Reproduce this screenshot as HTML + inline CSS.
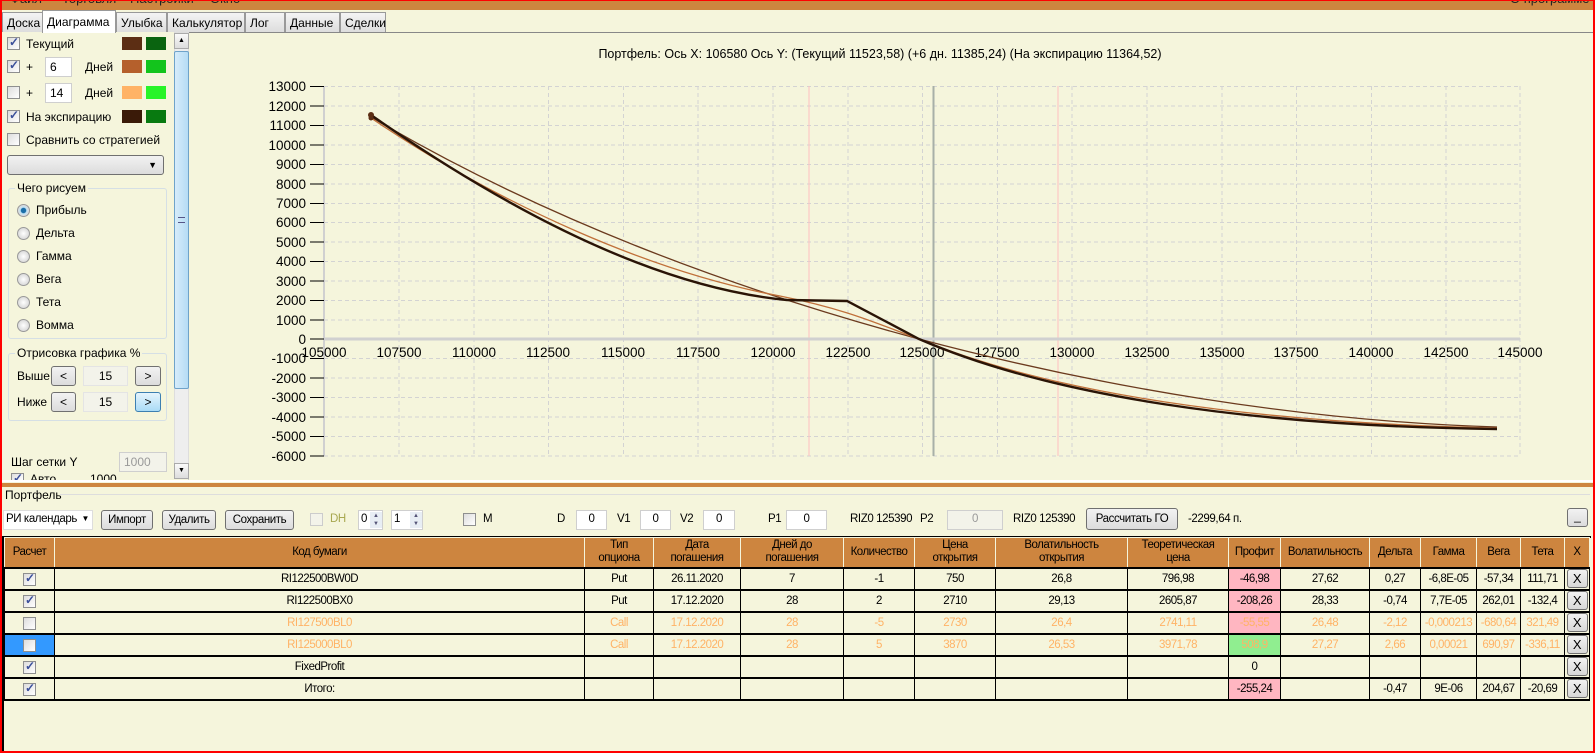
<!DOCTYPE html>
<html><head><meta charset="utf-8"><style>
*{box-sizing:border-box;margin:0;padding:0}
body{width:1595px;height:753px;overflow:hidden;background:#f5f5dc;font-family:"Liberation Sans",sans-serif;font-size:12px;color:#000;position:relative}
.a{position:absolute}
.menu{left:0;top:0;width:1595px;height:10px;background:#cd853f;overflow:hidden}
.menu span{position:absolute;top:-9px;font-size:13px;color:#222}
.tab{position:absolute;top:12px;height:20px;border:1px solid #999;border-bottom:none;background:linear-gradient(#f4f4f4,#ddd);font-size:12px;padding:3px 4px 0;white-space:nowrap}
.tab.sel{top:10px;height:23px;background:#fff;padding-top:4px}
.cb{position:absolute;width:13px;height:13px;border:1px solid #8e8f8f;background:linear-gradient(135deg,#ddd,#fff)}
.cb.on::after{content:"✓";position:absolute;left:1px;top:-3px;font-size:12px;color:#3a4f9a;font-weight:bold}
.sw{position:absolute;width:20px;height:13px}
.inp{position:absolute;background:#fff;border:1px solid #cfcfcf;padding:2px 4px;font-size:12px}
.rad{position:absolute;width:13px;height:13px;border-radius:50%;border:1px solid #999;background:radial-gradient(#fff,#ccc)}
.rad.on{background:radial-gradient(#1b6fa8 30%,#bfe2f5 40%,#ddd 70%)}
.grp{position:absolute;border:1px solid #d5dfe5;border-radius:3px}
.grp span{position:absolute;top:-8px;left:6px;background:#f5f5dc;padding:0 2px}
.btn{position:absolute;border:1px solid #707070;border-radius:3px;background:linear-gradient(#f2f2f2,#dcdcdc);text-align:center;font-size:12px}
.t{position:absolute;white-space:nowrap}
.n{font-size:11.5px;letter-spacing:-0.4px}
table{position:absolute;left:4px;top:537px;border-collapse:collapse;table-layout:fixed;width:1585px}
td{border:2px solid #000;border-width:0 1px 2px 1px;height:22px;text-align:center;font-size:11.5px;letter-spacing:-0.5px;white-space:nowrap;overflow:hidden;padding:0}
th{background:#cd853f;font-weight:normal;border:1px solid #f5f5dc;border-bottom:2px solid #000;height:30px;font-size:11.5px;letter-spacing:-0.5px;line-height:13px;padding:0}
td.c{position:relative}
td .cb{left:18px;top:4px}
.f{color:#ffb366}
.pk{background:#ffb6c1}.gr{background:#90ee90}
.x{display:inline-block;width:21px;height:19px;border:1px solid #707070;border-radius:3px;background:linear-gradient(#f2f2f2,#d8d8d8);font-size:13px;line-height:18px}
</style></head><body>
<div class="a menu"><span style="left:10px">Файл</span><span style="left:62px">Торговля</span><span style="left:130px">Настройки</span><span style="left:210px">Окно</span><span style="left:1510px">О программе</span></div>
<div class="a" style="left:0;top:0;width:1595px;height:753px;border:2px solid #f00;border-top:1px solid #f00;pointer-events:none;z-index:5"></div>
<div class="tab" style="left:2px;width:41px">Доска</div>
<div class="tab sel" style="left:42px;width:74px">Диаграмма</div>
<div class="tab" style="left:116px;width:51px">Улыбка</div>
<div class="tab" style="left:167px;width:78px">Калькулятор</div>
<div class="tab" style="left:245px;width:40px">Лог</div>
<div class="tab" style="left:285px;width:55px">Данные</div>
<div class="tab" style="left:340px;width:46px">Сделки</div>
<div class="a" style="left:188px;top:32px;width:1406px;height:450px;border-top:1px solid #888;border-left:1px solid #ccc;border-bottom:2px solid #888"></div>

<div class="cb on" style="left:7px;top:37px"></div><div class="t" style="left:26px;top:37px">Текущий</div>
<div class="sw" style="left:122px;top:37px;background:#5c2e14"></div><div class="sw" style="left:146px;top:37px;background:#0a6410"></div>
<div class="cb on" style="left:7px;top:60px"></div><div class="t" style="left:26px;top:60px">+</div>
<div class="inp" style="left:45px;top:57px;width:27px;height:20px">6</div><div class="t" style="left:85px;top:60px">Дней</div>
<div class="sw" style="left:122px;top:60px;background:#b5602c"></div><div class="sw" style="left:146px;top:60px;background:#13c41c"></div>
<div class="cb" style="left:7px;top:86px"></div><div class="t" style="left:26px;top:86px">+</div>
<div class="inp" style="left:45px;top:83px;width:27px;height:20px">14</div><div class="t" style="left:85px;top:86px">Дней</div>
<div class="sw" style="left:122px;top:86px;background:#ffb366"></div><div class="sw" style="left:146px;top:86px;background:#28f428"></div>
<div class="cb on" style="left:7px;top:110px"></div><div class="t" style="left:26px;top:110px">На экспирацию</div>
<div class="sw" style="left:122px;top:110px;background:#3a1a08"></div><div class="sw" style="left:146px;top:110px;background:#087a10"></div>
<div class="cb" style="left:7px;top:133px"></div><div class="t" style="left:26px;top:133px">Сравнить со стратегией</div>
<div class="btn" style="left:7px;top:155px;width:157px;height:20px;text-align:right;padding-right:6px;font-size:9px;line-height:18px">▼</div>
<div class="grp" style="left:8px;top:188px;width:159px;height:151px"><span>Чего рисуем</span></div>
<div class="rad on" style="left:17px;top:204px"></div><div class="t" style="left:36px;top:203px">Прибыль</div>
<div class="rad" style="left:17px;top:227px"></div><div class="t" style="left:36px;top:226px">Дельта</div>
<div class="rad" style="left:17px;top:250px"></div><div class="t" style="left:36px;top:249px">Гамма</div>
<div class="rad" style="left:17px;top:273px"></div><div class="t" style="left:36px;top:272px">Вега</div>
<div class="rad" style="left:17px;top:296px"></div><div class="t" style="left:36px;top:295px">Тета</div>
<div class="rad" style="left:17px;top:319px"></div><div class="t" style="left:36px;top:318px">Вомма</div>
<div class="grp" style="left:8px;top:353px;width:159px;height:68px"><span>Отрисовка графика %</span></div>
<div class="t" style="left:17px;top:369px">Выше</div>
<div class="btn" style="left:51px;top:366px;width:25px;height:20px;line-height:18px">&lt;</div>
<div class="inp" style="left:83px;top:366px;width:45px;height:20px;text-align:center;background:#f3f3ea;border-color:#e4e4e4">15</div>
<div class="btn" style="left:135px;top:366px;width:26px;height:20px;line-height:18px">&gt;</div>
<div class="t" style="left:17px;top:395px">Ниже</div>
<div class="btn" style="left:51px;top:392px;width:25px;height:20px;line-height:18px">&lt;</div>
<div class="inp" style="left:83px;top:392px;width:45px;height:20px;text-align:center;background:#f3f3ea;border-color:#e4e4e4">15</div>
<div class="btn" style="left:135px;top:392px;width:26px;height:20px;line-height:18px;border-color:#3c7fb1;background:linear-gradient(#e5f4fc,#a9dbf6)">&gt;</div>
<div class="t" style="left:11px;top:455px">Шаг сетки Y</div>
<div class="inp" style="left:119px;top:452px;width:48px;height:20px;color:#999;background:#f3f3ea">1000</div>
<div class="cb on" style="left:11px;top:473px;height:8px;overflow:hidden"></div><div class="t" style="left:30px;top:472px;height:9px;overflow:hidden">Авто</div><div class="t" style="left:90px;top:472px;height:9px;overflow:hidden">1000</div>
<div class="a" style="left:174px;top:32px;width:15px;height:447px;background:#eee;border:1px solid #ddd"></div>
<div class="a" style="left:174px;top:33px;width:15px;height:16px;border:1px solid #aaa;background:linear-gradient(#fafafa,#ddd);font-size:7px;text-align:center;line-height:14px">▲</div>
<div class="a" style="left:174px;top:51px;width:15px;height:338px;border:1px solid #6fa3c9;border-radius:2px;background:linear-gradient(90deg,#d7ecfa,#b5dcf5)"></div>
<div class="a" style="left:178px;top:217px;width:7px;height:6px;border-top:1px solid #558;border-bottom:1px solid #558"></div>
<div class="a" style="left:174px;top:463px;width:15px;height:16px;border:1px solid #aaa;background:linear-gradient(#fafafa,#ddd);font-size:7px;text-align:center;line-height:14px">▼</div>

<svg class="a" style="left:0;top:0" width="1595" height="753" font-family="Liberation Sans,sans-serif">
<text x="880" y="58" font-size="12.5" text-anchor="middle">Портфель: Ось X: 106580 Ось Y:  (Текущий 11523,58)  (+6 дн. 11385,24)  (На экспирацию 11364,52)</text>
<g stroke="#d3d3d3" stroke-dasharray="4,3" stroke-width="1">
<line x1="324" y1="86.5" x2="1520" y2="86.5"/><line x1="324" y1="106" x2="1520" y2="106"/><line x1="324" y1="125.5" x2="1520" y2="125.5"/><line x1="324" y1="145" x2="1520" y2="145"/><line x1="324" y1="164.5" x2="1520" y2="164.5"/><line x1="324" y1="184" x2="1520" y2="184"/><line x1="324" y1="203.5" x2="1520" y2="203.5"/><line x1="324" y1="222.5" x2="1520" y2="222.5"/><line x1="324" y1="242" x2="1520" y2="242"/><line x1="324" y1="261.5" x2="1520" y2="261.5"/><line x1="324" y1="281" x2="1520" y2="281"/><line x1="324" y1="300.5" x2="1520" y2="300.5"/><line x1="324" y1="320" x2="1520" y2="320"/><line x1="324" y1="358.5" x2="1520" y2="358.5"/><line x1="324" y1="378" x2="1520" y2="378"/><line x1="324" y1="397.5" x2="1520" y2="397.5"/><line x1="324" y1="417" x2="1520" y2="417"/><line x1="324" y1="436.5" x2="1520" y2="436.5"/><line x1="324" y1="456" x2="1520" y2="456"/>
<line x1="399" y1="86" x2="399" y2="456"/><line x1="474" y1="86" x2="474" y2="456"/><line x1="548.5" y1="86" x2="548.5" y2="456"/><line x1="623.5" y1="86" x2="623.5" y2="456"/><line x1="698" y1="86" x2="698" y2="456"/><line x1="773" y1="86" x2="773" y2="456"/><line x1="848" y1="86" x2="848" y2="456"/><line x1="922.5" y1="86" x2="922.5" y2="456"/><line x1="997.5" y1="86" x2="997.5" y2="456"/><line x1="1072" y1="86" x2="1072" y2="456"/><line x1="1147" y1="86" x2="1147" y2="456"/><line x1="1222" y1="86" x2="1222" y2="456"/><line x1="1296.5" y1="86" x2="1296.5" y2="456"/><line x1="1371.5" y1="86" x2="1371.5" y2="456"/><line x1="1446" y1="86" x2="1446" y2="456"/><line x1="1520" y1="86" x2="1520" y2="456"/>
</g>
<line x1="809" y1="86" x2="809" y2="456" stroke="#ffc0c0"/><line x1="1058" y1="86" x2="1058" y2="456" stroke="#ffc0c0"/>
<line x1="933.5" y1="86" x2="933.5" y2="456" stroke="#a8b0a8" stroke-width="2"/>
<line x1="324" y1="86" x2="324" y2="456" stroke="#d0d0d0" stroke-width="2"/>
<line x1="324" y1="339" x2="1520" y2="339" stroke="#d0d0d0" stroke-width="3"/>
<g stroke="#000"><line x1="310" y1="86.5" x2="324" y2="86.5"/><line x1="310" y1="106" x2="324" y2="106"/><line x1="310" y1="125.5" x2="324" y2="125.5"/><line x1="310" y1="145" x2="324" y2="145"/><line x1="310" y1="164.5" x2="324" y2="164.5"/><line x1="310" y1="184" x2="324" y2="184"/><line x1="310" y1="203.5" x2="324" y2="203.5"/><line x1="310" y1="222.5" x2="324" y2="222.5"/><line x1="310" y1="242" x2="324" y2="242"/><line x1="310" y1="261.5" x2="324" y2="261.5"/><line x1="310" y1="281" x2="324" y2="281"/><line x1="310" y1="300.5" x2="324" y2="300.5"/><line x1="310" y1="320" x2="324" y2="320"/><line x1="310" y1="339" x2="324" y2="339"/><line x1="310" y1="358.5" x2="324" y2="358.5"/><line x1="310" y1="378" x2="324" y2="378"/><line x1="310" y1="397.5" x2="324" y2="397.5"/><line x1="310" y1="417" x2="324" y2="417"/><line x1="310" y1="436.5" x2="324" y2="436.5"/><line x1="310" y1="456" x2="324" y2="456"/></g>
<g font-size="13.5" text-anchor="end">
<text x="306" y="91">13000</text><text x="306" y="111">12000</text><text x="306" y="130">11000</text><text x="306" y="150">10000</text><text x="306" y="169">9000</text><text x="306" y="189">8000</text><text x="306" y="208">7000</text><text x="306" y="227">6000</text><text x="306" y="247">5000</text><text x="306" y="266">4000</text><text x="306" y="286">3000</text><text x="306" y="305">2000</text><text x="306" y="325">1000</text><text x="306" y="344">0</text><text x="306" y="363">-1000</text><text x="306" y="383">-2000</text><text x="306" y="402">-3000</text><text x="306" y="422">-4000</text><text x="306" y="441">-5000</text><text x="306" y="461">-6000</text>
</g>
<g font-size="13.5" text-anchor="middle">
<text x="324" y="357">105000</text><text x="399" y="357">107500</text><text x="474" y="357">110000</text><text x="548" y="357">112500</text><text x="623" y="357">115000</text><text x="698" y="357">117500</text><text x="773" y="357">120000</text><text x="848" y="357">122500</text><text x="922" y="357">125000</text><text x="997" y="357">127500</text><text x="1072" y="357">130000</text><text x="1147" y="357">132500</text><text x="1222" y="357">135000</text><text x="1296" y="357">137500</text><text x="1371" y="357">140000</text><text x="1446" y="357">142500</text><text x="1520" y="357">145000</text>
</g>
<g fill="none">
<path d="M371,117 C520,205 700,280 919,339 C1100,387 1300,421 1497,427" stroke="#6b3a1e" stroke-width="1.3"/>
<path d="M371,118 C500,205 650,272 780,296 C850,310 880,325 919,339 C1050,393 1250,423 1497,428" stroke="#c0703a" stroke-width="1.3"/>
<path d="M371,115 C500,205 650,287 787,300 L847,301 L919,339 C1050,396 1250,426 1497,429" stroke="#2a1406" stroke-width="2.4"/>
</g>
<circle cx="371" cy="115" r="3" fill="#5c2e14"/><circle cx="371" cy="118" r="2.5" fill="#5c2e14"/>
</svg>

<div class="a" style="left:0;top:480px;width:1595px;height:2px;background:#fff"></div>
<div class="a" style="left:0;top:483px;width:1595px;height:4px;background:#cd853f"></div>
<div class="a" style="left:60px;top:494px;width:1530px;height:1px;background:#ddd"></div>
<div class="t" style="left:5px;top:488px">Портфель</div>

<div class="inp n" style="left:3px;top:510px;width:90px;height:20px;border-color:#ddd;padding:2px 2px">РИ календарь <span style="position:absolute;right:3px;top:3px;font-size:8px">▼</span></div>
<div class="btn n" style="left:101px;top:510px;width:52px;height:20px;line-height:18px">Импорт</div>
<div class="btn n" style="left:162px;top:510px;width:54px;height:20px;line-height:18px">Удалить</div>
<div class="btn n" style="left:225px;top:510px;width:69px;height:20px;line-height:18px">Сохранить</div>
<div class="cb" style="left:310px;top:513px;background:#f3f3ea;border-color:#ccc"></div><div class="t n" style="left:330px;top:513px;color:#a8a850">DH</div>
<div class="inp n" style="left:358px;top:510px;width:25px;height:20px;padding:2px">0</div>
<div class="inp n" style="left:391px;top:510px;width:32px;height:20px;padding:2px">1</div>
<div class="a" style="left:370px;top:512px;width:12px;height:16px;font-size:6px;line-height:8px;color:#557;text-align:center;background:#e8eef4">▲<br>▼</div>
<div class="a" style="left:410px;top:512px;width:12px;height:16px;font-size:6px;line-height:8px;color:#557;text-align:center;background:#e8eef4">▲<br>▼</div>
<div class="cb" style="left:463px;top:513px"></div><div class="t n" style="left:483px;top:513px">M</div>
<div class="t n" style="left:557px;top:513px">D</div><div class="inp n" style="left:576px;top:510px;width:31px;height:20px;text-align:center">0</div>
<div class="t n" style="left:617px;top:513px">V1</div><div class="inp n" style="left:640px;top:510px;width:31px;height:20px;text-align:center">0</div>
<div class="t n" style="left:680px;top:513px">V2</div><div class="inp n" style="left:703px;top:510px;width:32px;height:20px;text-align:center">0</div>
<div class="t n" style="left:768px;top:513px">P1</div><div class="inp n" style="left:786px;top:510px;width:41px;height:20px;text-align:center">0</div>
<div class="t n" style="left:850px;top:513px">RIZ0 125390</div><div class="t n" style="left:920px;top:513px">P2</div>
<div class="inp n" style="left:947px;top:510px;width:56px;height:20px;text-align:center;color:#999;background:#f3f3ea">0</div>
<div class="t n" style="left:1013px;top:513px">RIZ0 125390</div>
<div class="btn n" style="left:1086px;top:508px;width:92px;height:22px;line-height:20px">Рассчитать ГО</div>
<div class="t n" style="left:1188px;top:513px">-2299,64 п.</div>
<div class="btn" style="left:1567px;top:508px;width:21px;height:19px;line-height:14px">_</div>

<div class="a" style="left:2px;top:536px;width:1589px;height:216px;border:2px solid #000;border-bottom:none;border-right:none"></div>
<table>
<colgroup><col style="width:50px"><col style="width:530px"><col style="width:69px"><col style="width:87px"><col style="width:103px"><col style="width:71px"><col style="width:81px"><col style="width:132px"><col style="width:101px"><col style="width:52px"><col style="width:89px"><col style="width:51px"><col style="width:56px"><col style="width:44px"><col style="width:44px"><col style="width:25px"></colgroup>
<tr><th>Расчет</th><th>Код бумаги</th><th>Тип<br>опциона</th><th>Дата<br>погашения</th><th>Дней до<br>погашения</th><th>Количество</th><th>Цена<br>открытия</th><th>Волатильность<br>открытия</th><th>Теоретическая<br>цена</th><th>Профит</th><th>Волатильность</th><th>Дельта</th><th>Гамма</th><th>Вега</th><th>Тета</th><th>X</th></tr>
<tr><td class="c"><div class="cb on"></div></td><td>RI122500BW0D</td><td>Put</td><td>26.11.2020</td><td>7</td><td>-1</td><td>750</td><td>26,8</td><td>796,98</td><td class="pk">-46,98</td><td>27,62</td><td>0,27</td><td>-6,8E-05</td><td>-57,34</td><td>111,71</td><td><span class="x">X</span></td></tr>
<tr><td class="c"><div class="cb on"></div></td><td>RI122500BX0</td><td>Put</td><td>17.12.2020</td><td>28</td><td>2</td><td>2710</td><td>29,13</td><td>2605,87</td><td class="pk">-208,26</td><td>28,33</td><td>-0,74</td><td>7,7E-05</td><td>262,01</td><td>-132,4</td><td><span class="x">X</span></td></tr>
<tr class="f"><td class="c"><div class="cb"></div></td><td>RI127500BL0</td><td>Call</td><td>17.12.2020</td><td>28</td><td>-5</td><td>2730</td><td>26,4</td><td>2741,11</td><td class="pk">-55,55</td><td>26,48</td><td>-2,12</td><td>-0,000213</td><td>-680,64</td><td>321,49</td><td><span class="x" style="color:#000">X</span></td></tr>
<tr class="f"><td class="c" style="background:#3399ff"><div class="cb"></div></td><td>RI125000BL0</td><td>Call</td><td>17.12.2020</td><td>28</td><td>5</td><td>3870</td><td>26,53</td><td>3971,78</td><td class="gr">508,9</td><td>27,27</td><td>2,66</td><td>0,00021</td><td>690,97</td><td>-336,11</td><td><span class="x" style="color:#000">X</span></td></tr>
<tr><td class="c"><div class="cb on"></div></td><td>FixedProfit</td><td></td><td></td><td></td><td></td><td></td><td></td><td></td><td>0</td><td></td><td></td><td></td><td></td><td></td><td><span class="x">X</span></td></tr>
<tr><td class="c"><div class="cb on"></div></td><td>Итого:</td><td></td><td></td><td></td><td></td><td></td><td></td><td></td><td class="pk">-255,24</td><td></td><td>-0,47</td><td>9E-06</td><td>204,67</td><td>-20,69</td><td><span class="x">X</span></td></tr>
</table>
</body></html>
